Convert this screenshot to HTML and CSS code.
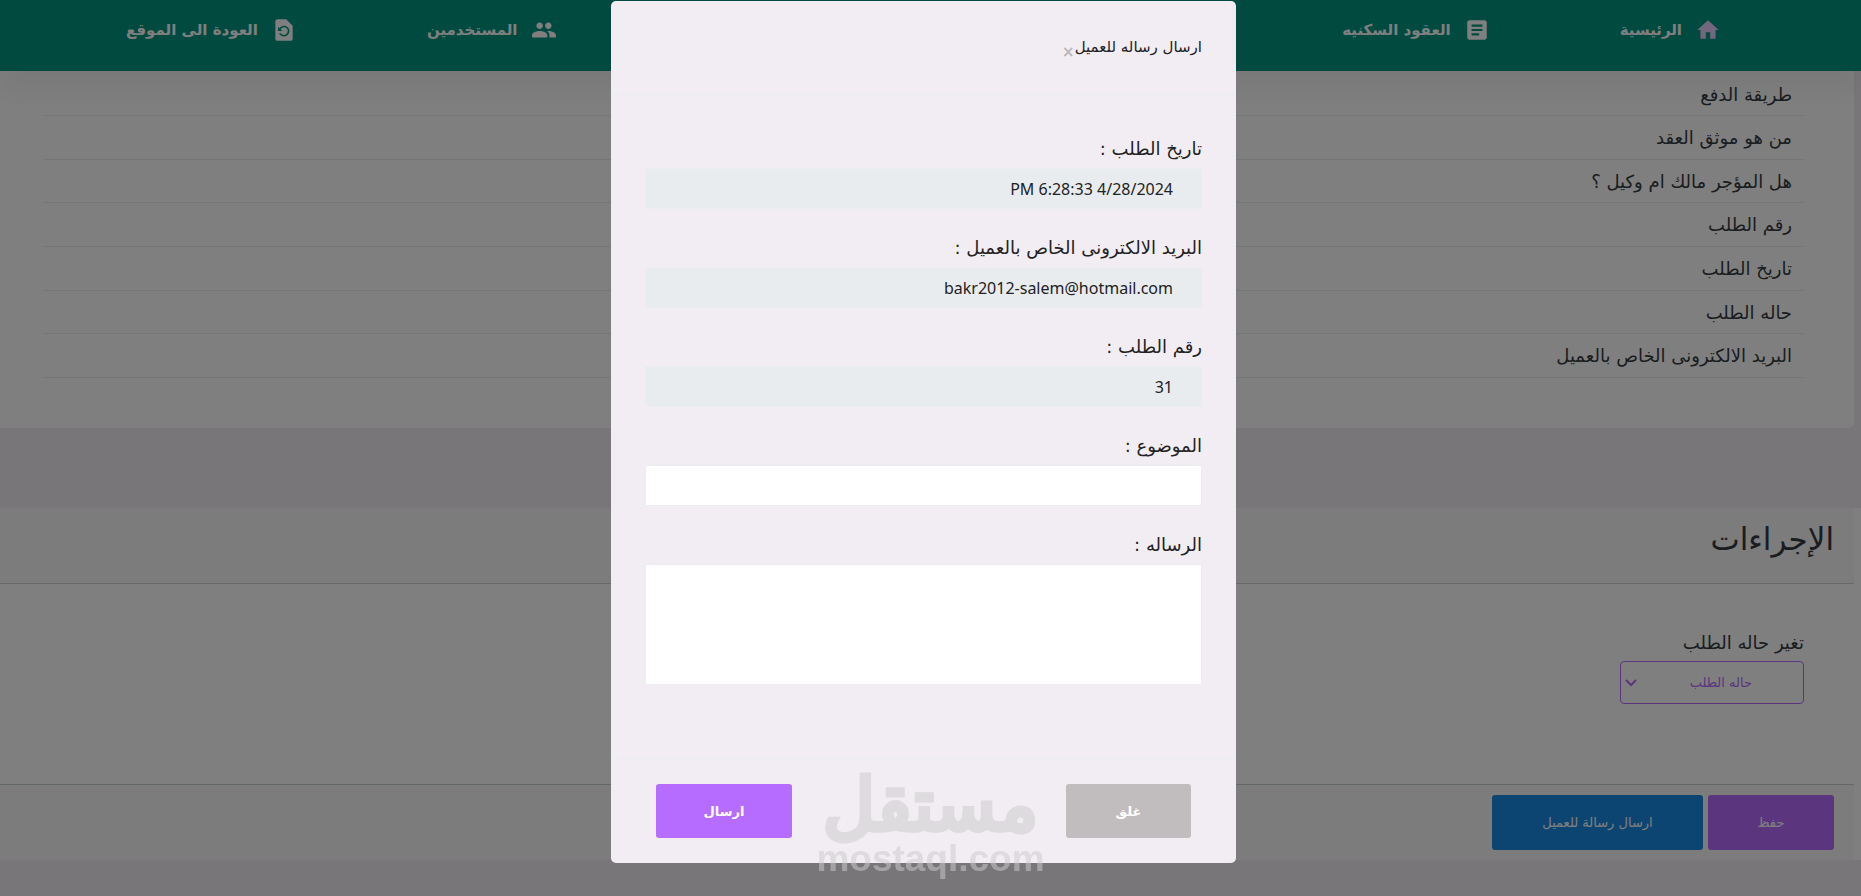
FILE: index.html
```html
<!DOCTYPE html>
<html lang="ar" dir="rtl">
<head>
  <meta charset="UTF-8" />
  <meta name="viewport" content="width=device-width, initial-scale=1.0"/>
  <title>ارسال رساله للعميل</title>
  <link rel="stylesheet" href="styles.css">
</head>
<body>

  <!-- Navbar -->
  <nav class="navbar">
    <div class="nav-group">
      <a href="#" class="active">
        <svg viewBox="0 0 24 24"><path d="M10,20V14H14V20H19V12H22L12,3L2,12H5V20H10Z"/></svg>
        <span>الرئيسية</span>
      </a>
      <a href="#">
        <svg viewBox="0 0 24 24"><path d="M19 3H5c-1.1 0-2 .9-2 2v14c0 1.1.9 2 2 2h14c1.1 0 2-.9 2-2V5c0-1.1-.9-2-2-2zm-5 14H7v-2h7v2zm3-4H7v-2h10v2zm0-4H7V7h10v2z"/></svg>
        <span>العقود السكنيه</span>
      </a>
    </div>
    <div class="nav-group">
      <a href="#">
        <svg viewBox="0 0 24 24"><path d="M16 11c1.66 0 2.99-1.34 2.99-3S17.66 5 16 5c-1.66 0-3 1.34-3 3s1.34 3 3 3zm-8 0c1.66 0 2.99-1.34 2.99-3S9.66 5 8 5C6.34 5 5 6.34 5 8s1.34 3 3 3zm0 2c-2.33 0-7 1.17-7 3.5V19h14v-2.5c0-2.33-4.67-3.5-7-3.5zm8 0c-.29 0-.62.02-.97.05 1.16.84 1.97 1.97 1.97 3.45V19h6v-2.5c0-2.33-4.67-3.5-7-3.5z"/></svg>
        <span>المستخدمين</span>
      </a>
      <a href="#">
        <svg viewBox="0 0 24 24"><path d="M14 2H6c-1.1 0-1.99.9-1.99 2L4 20c0 1.1.89 2 1.99 2H18c1.1 0 2-.9 2-2V8l-6-6zm-2 16c-2.05 0-3.81-1.24-4.58-3h1.71c.63.9 1.68 1.5 2.87 1.5 1.93 0 3.5-1.57 3.5-3.5S13.93 9.5 12 9.5c-1.35 0-2.52.78-3.1 1.9l1.6 1.6h-4V9l1.3 1.3C8.69 8.92 10.23 8 12 8c2.76 0 5 2.24 5 5s-2.24 5-5 5z"/></svg>
        <span>العودة الى الموقع</span>
      </a>
    </div>
  </nav>

  <!-- Order details -->
  <main>
    <div class="details">
      <table>
        <tr><th scope="row">طريقة الدفع</th><td></td></tr>
        <tr><th scope="row">من هو موثق العقد</th><td></td></tr>
        <tr><th scope="row">هل المؤجر مالك ام وكيل ؟</th><td></td></tr>
        <tr><th scope="row">رقم الطلب</th><td></td></tr>
        <tr><th scope="row">تاريخ الطلب</th><td></td></tr>
        <tr><th scope="row">حاله الطلب</th><td></td></tr>
        <tr><th scope="row">البريد الالكترونى الخاص بالعميل</th><td></td></tr>
      </table>
    </div>

    <!-- Actions -->
    <section class="actions">
      <div class="card">
        <div class="card-header">
          <h2>الإجراءات</h2>
        </div>
        <div class="card-body">
          <label for="status">تغير حاله الطلب</label>
          <div class="select-wrap">
            <select id="status">
              <option>حاله الطلب</option>
            </select>
            <svg viewBox="0 0 12 8"><path d="M1 1l5 5 5-5"/></svg>
          </div>
        </div>
        <div class="card-footer">
          <button type="button" class="btn btn-primary">حفظ</button>
          <button type="button" class="btn btn-info">ارسال رسالة للعميل</button>
        </div>
      </div>
    </section>
  </main>

  <!-- Message modal -->
  <div class="overlay">
    <form class="modal">
      <div class="modal-header">
        <h5>ارسال رساله للعميل</h5>
        <button type="button" class="close" aria-label="Close">×</button>
      </div>
      <div class="modal-body">
        <div class="field">
          <label for="date">تاريخ الطلب :</label>
          <input type="text" id="date" value="4/28/2024 6:28:33 PM" readonly>
        </div>
        <div class="field">
          <label for="email">البريد الالكترونى الخاص بالعميل :</label>
          <input type="text" id="email" value="bakr2012-salem@hotmail.com" readonly>
        </div>
        <div class="field">
          <label for="order">رقم الطلب :</label>
          <input type="text" id="order" value="31" readonly>
        </div>
        <div class="field">
          <label for="subject">الموضوع :</label>
          <input type="text" id="subject">
        </div>
        <div class="field">
          <label for="message">الرساله :</label>
          <textarea id="message"></textarea>
        </div>
      </div>
      <div class="modal-footer">
        <button type="button" class="btn btn-close">غلق</button>
        <button type="submit" class="btn btn-send">ارسال</button>
      </div>
    </form>
  </div>

  <!-- Watermark -->
  <div class="watermark">
    <div class="mark-ar">مستقل</div>
    <div class="mark-en">mostaql.com</div>
  </div>

</body>
</html>
```
FILE: styles.css
```css
* {
  box-sizing: border-box;
}

body {
  margin: 0;
  height: 100vh;
  overflow: hidden;
  background: #f2edf3;
  color: #343a40;
  font-family: "DejaVu Sans", sans-serif;
  font-size: 18px;
}

/* Navbar */
.navbar {
  position: relative;
  z-index: 1;
  display: flex;
  justify-content: space-between;
  height: 71px;
  padding: 16px 140px 0 126px;
  background: #00947e;
  box-shadow: 0 19px 27px rgba(60, 30, 70, 0.06);
}

.nav-group {
  display: flex;
  align-items: flex-start;
  gap: 130px;
}

.navbar a {
  display: flex;
  align-items: center;
  gap: 13px;
  height: 28px;
  color: white;
  font-size: 15px;
  font-weight: bold;
  text-decoration: none;
}

.navbar svg {
  width: 26px;
  height: 26px;
  fill: white;
}

.navbar .active svg {
  fill: #e6ccff;
}

/* Order details */
.details {
  margin-right: 7px;
  margin-bottom: 80px;
  padding: 2px 50px 50px 43px;
  background: white;
  border-radius: 0 0 6px 0;
}

table {
  width: 100%;
  height: 305px;
  border-collapse: collapse;
}

th,
td {
  padding: 0 12px;
  border-bottom: 1px solid #ebedf2;
  font-weight: normal;
  text-align: right;
}

/* Actions */
.actions {
  background: white;
}

.card {
  margin-right: 7px;
}

.card-header {
  height: 76px;
  padding: 8px 20px;
  background: #f8f8f8;
  border-bottom: 1px solid #d0d0d0;
}

.card-header h2 {
  margin: 0;
  font-size: 31px;
  line-height: 46px;
  font-weight: normal;
}

.card-body {
  padding: 47px 50px 80px;
}

.card-body label {
  display: block;
  line-height: 24px;
  margin-bottom: 6px;
}

.select-wrap {
  position: relative;
  width: 184px;
}

.select-wrap select {
  display: block;
  width: 100%;
  height: 43px;
  padding: 0 51px 0 30px;
  appearance: none;
  background: white;
  border: 1px solid #b66dff;
  border-radius: 4px;
  color: #b66dff;
  font-family: inherit;
  font-size: 13px;
}

.select-wrap svg {
  position: absolute;
  left: 5px;
  top: 18px;
  width: 12px;
  height: 8px;
  fill: none;
  stroke: #b66dff;
  stroke-width: 2;
}

.card-footer {
  display: flex;
  gap: 5px;
  padding: 10px 20px;
  background: #f8f8f8;
  border-top: 1px solid #c5d0d5;
}

.btn {
  height: 55px;
  border: none;
  border-radius: 3px;
  color: white;
  font-family: inherit;
  font-size: 13px;
  cursor: pointer;
}

.btn-primary {
  width: 126px;
  background: #b66dff;
}

.btn-info {
  width: 211px;
  background: #198ae3;
}

/* Modal */
.overlay {
  position: fixed;
  inset: 0;
  z-index: 10;
  display: flex;
  justify-content: center;
  align-items: flex-start;
  padding: 1px 14px 0 0;
  background: rgba(0, 0, 0, 0.5);
}

.modal {
  width: 625px;
  background: #f2edf3;
  border-radius: 5px;
  color: #222;
}

.modal-header {
  display: flex;
  height: 95px;
  padding: 34px 34px 0;
  border-bottom: 1px solid #ebedf2;
}

.modal-header h5 {
  margin: 0;
  font-size: 15px;
  line-height: 24px;
  font-weight: normal;
}

.close {
  align-self: flex-start;
  padding: 0;
  background: none;
  border: none;
  color: #bbb7bb;
  font-family: inherit;
  font-size: 15px;
  font-weight: bold;
  line-height: 34px;
  cursor: pointer;
}

.modal-body {
  display: flex;
  flex-direction: column;
  gap: 26px;
  padding: 40px 34px 74px;
}

.field label {
  display: block;
  margin-bottom: 6px;
  line-height: 26px;
}

.field input,
.field textarea {
  display: block;
  width: 100%;
  height: 41px;
  padding: 0 28px;
  background: white;
  border: 1px solid #ebedf2;
  border-radius: 2px;
  outline: none;
  color: #222;
  font-family: "Noto Sans", "DejaVu Sans", sans-serif;
  font-size: 16px;
}

.field input:read-only {
  background: #e9ecef;
}

.field textarea {
  height: 121px;
  padding: 10px 28px;
  resize: none;
}

.modal-footer {
  display: flex;
  justify-content: space-between;
  padding: 24px 45px 25px;
  border-top: 1px solid #ebedf2;
}

.modal-footer .btn {
  height: 54px;
  font-weight: bold;
}

.btn-close {
  width: 125px;
  background: #c1bcbd;
}

.btn-send {
  width: 136px;
  background: #b66dff;
}

/* Watermark */
.watermark {
  position: fixed;
  left: 0;
  right: 0;
  bottom: 18px;
  z-index: 20;
  color: #cbcbcb;
  text-align: center;
  opacity: 0.53;
  pointer-events: none;
}

.mark-ar {
  font-size: 72px;
  line-height: 70px;
  -webkit-text-stroke: 5px #cbcbcb;
}

.mark-en {
  font-family: "Liberation Sans", sans-serif;
  font-size: 37px;
  line-height: 38px;
  font-weight: bold;
}
```
